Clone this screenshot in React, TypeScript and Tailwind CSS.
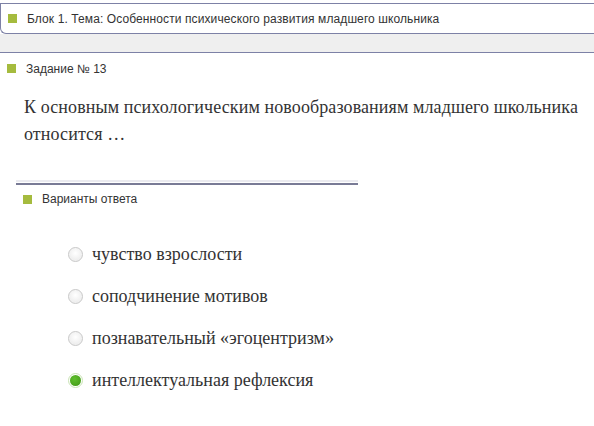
import { useState } from 'react'

const options = [
  'чувство взрослости',
  'соподчинение мотивов',
  'познавательный «эгоцентризм»',
  'интеллектуальная рефлексия',
]

function Marker() {
  return <span className="inline-block h-[9px] w-[9px] shrink-0 bg-[#a5bb3e]" />
}

function Radio({ checked }: { checked: boolean }) {
  return checked ? (
    <span className="flex h-[15px] w-[15px] shrink-0 items-center justify-center rounded-full border border-[#c9e3b4] bg-white">
      <span className="h-[11px] w-[11px] rounded-full bg-[radial-gradient(circle_at_40%_35%,#5fbf2c,#3f9615)]" />
    </span>
  ) : (
    <span className="h-[15px] w-[15px] shrink-0 rounded-full border border-[#c8c8c8] bg-[radial-gradient(circle_at_50%_40%,#ffffff,#e6e6e6)] shadow-[inset_0_0_1px_#ffffff]" />
  )
}

export default function App() {
  const [selected, setSelected] = useState(3)

  return (
    <div className="h-[426px] w-[594px] overflow-hidden bg-white font-['Liberation_Sans',Arial,sans-serif] text-[#333]">
      {/* блок */}
      <div className="mt-[3px] flex h-[31px] items-center gap-[10px] rounded-bl-[6px] border-y border-l border-[#7d81a6] bg-white pl-[7px] text-[12px] tracking-[0.1px]">
        <Marker />
        <span>Блок 1. Тема: Особенности психического развития младшего школьника</span>
      </div>
      <div className="h-[19px] border-b border-[#7d81a6] bg-[#efefef]" />

      {/* задание */}
      <div className="flex h-[30px] items-center gap-[10px] pl-[7px] pt-[1px] text-[12px]">
        <Marker />
        <span>Задание № 13</span>
      </div>
      <div className="pl-[24px] pr-[10px] pt-[11px] font-['Liberation_Serif','Times_New_Roman',serif] text-[18px] leading-[27px] tracking-[0.1px] text-[#333]">
        К основным психологическим новообразованиям младшего школьника относится …
      </div>

      {/* варианты */}
      <div className="ml-[16px] mt-[35px] w-[342px] border-b-2 border-[#797b96] shadow-[0_-3px_0_#ebebf0]" />
      <div className="flex h-[28px] items-center gap-[10px] pl-[23px] text-[12px]">
        <Marker />
        <span>Варианты ответа</span>
      </div>

      <div className="mt-[31px] flex flex-col gap-[21px] pl-[68px] font-['Liberation_Serif','Times_New_Roman',serif] text-[18px]">
        {options.map((o, i) => (
          <label
            key={o}
            onClick={() => setSelected(i)}
            className="flex h-[21px] cursor-pointer items-center gap-[9px]"
          >
            <Radio checked={selected === i} />
            <span>{o}</span>
          </label>
        ))}
      </div>
    </div>
  )
}
